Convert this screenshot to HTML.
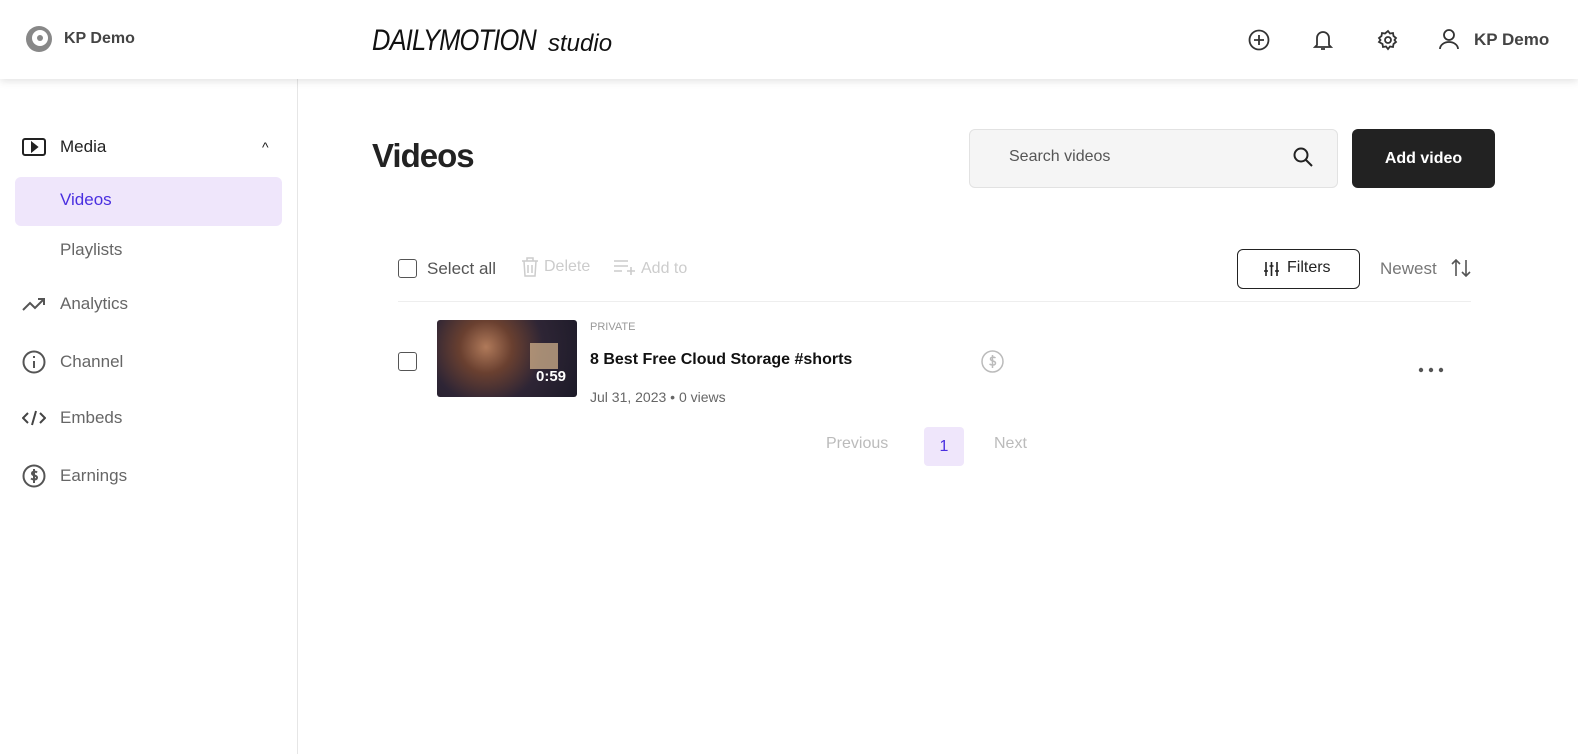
<!DOCTYPE html>
<html><head><style>
*{box-sizing:border-box;margin:0;padding:0}
body{width:1578px;height:754px;font-family:"Liberation Sans",sans-serif;background:#fff;position:relative;overflow:hidden;color:#222}
.hdr{position:absolute;left:0;top:0;width:1578px;height:79px;background:#fff;box-shadow:0 2px 8px rgba(0,0,0,.12);z-index:2}
.side{position:absolute;left:0;top:79px;width:298px;height:675px;border-right:1px solid #e6e6e6}
.abs{position:absolute}
.nav{position:absolute;left:22px;font-size:17px;color:#666;display:flex;align-items:center;gap:14px}
svg{display:block}
</style></head><body>
<div class="hdr">
 <svg class="abs" style="left:25px;top:25px" width="28" height="28" viewBox="0 0 28 28"><circle cx="14" cy="14" r="13" fill="#888"/><circle cx="15" cy="13" r="8" fill="#fff"/><circle cx="15" cy="13" r="3" fill="#888"/></svg>
 <div class="abs" style="left:64px;top:30px;font-size:16px;font-weight:bold;color:#444">KP Demo</div>
 <div class="abs" style="left:372px;top:24px;font-size:30px;font-style:italic;letter-spacing:-1px;transform:scaleX(.85);transform-origin:left;color:#111">DAILYMOTION</div>
 <div class="abs" style="left:548px;top:30px;font-size:24px;font-style:italic;color:#111">studio</div>
 <svg class="abs" style="left:1248px;top:29px" width="22" height="22" viewBox="0 0 22 22" fill="none" stroke="#333" stroke-width="1.8"><circle cx="11" cy="11" r="9.5"/><path d="M11 6v10M6 11h10"/></svg>
 <svg class="abs" style="left:1313px;top:28px" width="20" height="24" viewBox="0 0 20 24" fill="none" stroke="#333" stroke-width="1.8"><path d="M4 17V10a6 6 0 0112 0v7l2 2H2z M8 21h4"/></svg>
 <svg class="abs" style="left:1377px;top:29px" width="22" height="22" viewBox="0 0 22 22" fill="none" stroke="#333" stroke-width="1.8"><circle cx="11" cy="11" r="3"/><path d="M11 2l2 2.5 3-.5.5 3 2.5 2-1.5 2 1.5 2-2.5 2-.5 3-3-.5-2 2.5-2-2.5-3 .5-.5-3L2 13l1.5-2L2 9l2.5-2 .5-3 3 .5z"/></svg>
 <svg class="abs" style="left:1438px;top:28px" width="22" height="22" viewBox="0 0 22 22" fill="none" stroke="#333" stroke-width="1.8"><circle cx="11" cy="7" r="5"/><path d="M2 21a9 7 0 0118 0"/></svg>
 <div class="abs" style="left:1474px;top:30px;font-size:17px;font-weight:bold;color:#444">KP Demo</div>
</div>
<div class="side">
 <div class="nav" style="top:58px;color:#222"><svg width="24" height="20" viewBox="0 0 24 20" fill="none" stroke="#222" stroke-width="2"><rect x="1" y="2" width="22" height="16" rx="2"/><path d="M10 6l5 4-5 4z" fill="#222"/></svg>Media</div>
 <div class="abs" style="left:262px;top:60px;font-size:14px">^</div>
 <div class="abs" style="left:15px;top:98px;width:267px;height:49px;background:#efe6fb;border-radius:6px"></div>
 <div class="abs" style="left:60px;top:111px;font-size:17px;color:#4a2fe0">Videos</div>
 <div class="abs" style="left:60px;top:161px;font-size:17px;color:#666">Playlists</div>
 <div class="nav" style="top:215px"><svg width="24" height="16" viewBox="0 0 24 16" fill="none" stroke="#555" stroke-width="2"><path d="M1 14l7-7 5 5 9-9M16 3h6v6"/></svg>Analytics</div>
 <div class="nav" style="top:271px"><svg width="24" height="24" viewBox="0 0 24 24" fill="none" stroke="#555" stroke-width="2"><circle cx="12" cy="12" r="10.5"/><path d="M12 11v7M12 6v2"/></svg>Channel</div>
 <div class="nav" style="top:329px"><svg width="24" height="18" viewBox="0 0 24 18" fill="none" stroke="#444" stroke-width="2"><path d="M6 4L1 9l5 5M18 4l5 5-5 5M14 2l-4 14"/></svg>Embeds</div>
 <div class="nav" style="top:385px"><svg width="24" height="24" viewBox="0 0 24 24" fill="none" stroke="#555" stroke-width="2"><circle cx="12" cy="12" r="10.5"/><path d="M15 8.5c-1-1-5-1.5-5 1s5 1.5 5 4-4 2.5-6 1M12 5v14"/></svg>Earnings</div>
</div>
<div class="abs" style="left:372px;top:137px;font-size:33px;font-weight:bold;letter-spacing:-1px;color:#222">Videos</div>
<div class="abs" style="left:969px;top:129px;width:369px;height:59px;background:#f5f5f5;border:1px solid #e2e2e2;border-radius:6px"></div>
<div class="abs" style="left:1009px;top:148px;font-size:16px;color:#555">Search videos</div>
<svg class="abs" style="left:1293px;top:147px" width="20" height="20" viewBox="0 0 20 20" fill="none" stroke="#222" stroke-width="2"><circle cx="8" cy="8" r="6.5"/><path d="M13 13l6 6"/></svg>
<div class="abs" style="left:1352px;top:129px;width:143px;height:59px;background:#222;border-radius:6px;color:#fff;font-weight:bold;font-size:16px;text-align:center;line-height:59px">Add video</div>
<div class="abs" style="left:398px;top:259px;width:19px;height:19px;border:1.5px solid #555;border-radius:3px"></div>
<div class="abs" style="left:427px;top:259px;font-size:17px;color:#555">Select all</div>
<svg class="abs" style="left:521px;top:257px" width="18" height="20" viewBox="0 0 18 20" fill="none" stroke="#ccc" stroke-width="1.5"><path d="M1 4h16M6 4V1h6v3M3 4l1 15h10l1-15M7 8v8M11 8v8"/></svg>
<div class="abs" style="left:544px;top:258px;font-size:16px;color:#ccc">Delete</div>
<svg class="abs" style="left:614px;top:259px" width="22" height="16" viewBox="0 0 22 16" fill="none" stroke="#ccc" stroke-width="1.6"><path d="M0 2h14M0 7h14M0 12h8M17 8v8M13 12h8"/></svg>
<div class="abs" style="left:641px;top:260px;font-size:16px;color:#ccc">Add to</div>
<div class="abs" style="left:1237px;top:249px;width:123px;height:40px;border:1px solid #222;border-radius:6px"></div>
<svg class="abs" style="left:1264px;top:262px" width="15" height="14" viewBox="0 0 15 14" fill="none" stroke="#222" stroke-width="1.6"><path d="M2 0v14M7.5 0v14M13 0v14M0 9h4M5.5 4h4M11 9h4"/></svg>
<div class="abs" style="left:1287px;top:259px;font-size:16px;color:#222">Filters</div>
<div class="abs" style="left:1380px;top:259px;font-size:17px;color:#777">Newest</div>
<svg class="abs" style="left:1451px;top:259px" width="20" height="18" viewBox="0 0 20 18" fill="none" stroke="#555" stroke-width="1.6"><path d="M5 17V1M1 5l4-4 4 4M15 1v16M11 13l4 4 4-4"/></svg>
<div class="abs" style="left:398px;top:301px;width:1073px;height:1px;background:#eee"></div>
<div class="abs" style="left:398px;top:352px;width:19px;height:19px;border:1.5px solid #555;border-radius:3px"></div>
<div class="abs" style="left:437px;top:320px;width:140px;height:77px;border-radius:3px;background:radial-gradient(circle at 35% 35%,#b07a5a 0,#6a4030 25%,#2e2535 55%,#1c1a28 100%)"></div>
<div class="abs" style="left:530px;top:343px;width:28px;height:26px;background:#d8b890;opacity:.7"></div>
<div class="abs" style="left:536px;top:368px;font-size:15px;font-weight:bold;color:#fff">0:59</div>
<div class="abs" style="left:590px;top:321px;font-size:11px;color:#999">PRIVATE</div>
<div class="abs" style="left:590px;top:351px;font-size:16px;font-weight:bold;color:#111">8 Best Free Cloud Storage #shorts</div>
<div class="abs" style="left:590px;top:389px;font-size:14px;color:#666">Jul 31, 2023 • 0 views</div>
<svg class="abs" style="left:981px;top:350px" width="23" height="23" viewBox="0 0 23 23" fill="none" stroke="#bbb" stroke-width="1.5"><circle cx="11.5" cy="11.5" r="10.5"/><path d="M14.5 8c-1-1-5-1.5-5 1s5 1.5 5 4-4 2.5-6 1M11.5 5v13"/></svg>
<svg class="abs" style="left:1418px;top:367px" width="28" height="6" viewBox="0 0 28 6" fill="#555"><circle cx="3" cy="3" r="2.2"/><circle cx="13" cy="3" r="2.2"/><circle cx="23" cy="3" r="2.2"/></svg>
<div class="abs" style="left:826px;top:435px;font-size:16px;color:#bbb">Previous</div>
<div class="abs" style="left:924px;top:427px;width:40px;height:39px;background:#efe6fb;border-radius:4px;color:#4a2fe0;font-size:16px;text-align:center;line-height:39px">1</div>
<div class="abs" style="left:994px;top:435px;font-size:16px;color:#bbb">Next</div>
</body></html>
